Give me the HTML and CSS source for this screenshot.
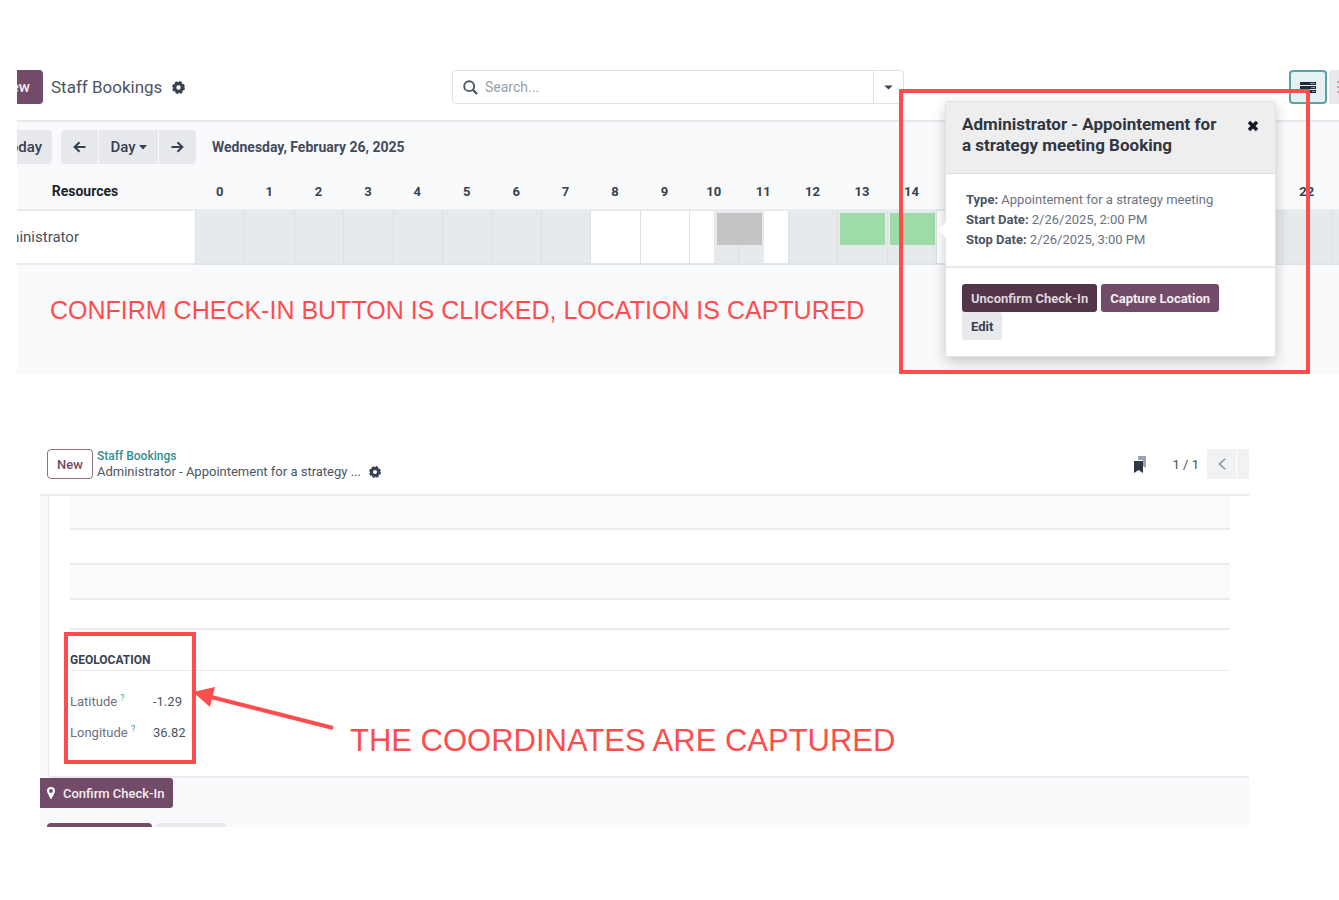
FILE: index.html
```html
<!DOCTYPE html>
<html lang="en">
<head>
<meta charset="utf-8">
<title>Staff Bookings</title>
<link rel="stylesheet" href="styles.css">
</head>
<body>
<main class="page">
  <section class="panel schedule">
    <header class="topbar">
      <button class="btn btn-primary btn-new" type="button">New</button>
      <h1 class="title">Staff Bookings</h1>
      <button class="icon-btn gear" type="button" aria-label="Settings"><svg width="13" height="13" viewBox="0 0 16 16"><g fill="none" stroke="#374151"><circle cx="8" cy="8" r="4.7" stroke-width="4"/><circle cx="8" cy="8" r="6.800" stroke-width="2.200" stroke-dasharray="3.400 1.940"/></g></svg></button>
      <div class="search">
        <svg class="search-icon" width="15" height="15" viewBox="0 0 16 16"><g fill="none" stroke="#4b5563" stroke-width="2"><circle cx="6.6" cy="6.6" r="5.3"/><path d="M10.5 10.5 15 15" stroke-width="2.4"/></g></svg>
        <input class="search-input" type="text" placeholder="Search..." aria-label="Search">
        <button class="search-toggle" type="button" aria-label="Filters"><svg width="9" height="5" viewBox="0 0 10 6"><path d="M0 .5h10L5 5.5z" fill="#374151"/></svg></button>
      </div>
      <div class="views">
        <button class="view view-active" type="button" aria-label="Gantt view"><svg width="16" height="13" viewBox="0 0 16 13"><path fill="#1f2937" d="M0 1h16v3H0zM0 5h16v3H0zM4 9h12v3H4z"/><path stroke="#8a9ba5" stroke-width="1" d="M10 2.500h5M11 6.500h4M12 10.500h3"/></svg></button>
        <button class="view view-list" type="button" aria-label="List view"><svg width="12" height="12" viewBox="0 0 12 12"><path stroke="#d9a0ae" stroke-width="2" d="M0 1h12M0 6h12M0 11h12"/></svg></button>
      </div>
    </header>

    <nav class="toolbar">
      <button class="btn btn-light btn-today" type="button">Today</button>
      <div class="range">
        <button class="btn btn-light step" type="button" aria-label="Previous"><svg width="13" height="12" viewBox="0 0 13 12"><path d="M12.5 6H2M6.5 1.2 1.6 6l4.9 4.8" fill="none" stroke="#374151" stroke-width="2"/></svg></button>
        <button class="btn btn-light scale" type="button">Day<svg width="8" height="5" viewBox="0 0 8 5"><path d="M0 0h8L4 4.5z" fill="#374151"/></svg></button>
        <button class="btn btn-light step" type="button" aria-label="Next"><svg width="13" height="12" viewBox="0 0 13 12"><path d="M.5 6H11M6.5 1.2 11.4 6l-4.9 4.8" fill="none" stroke="#374151" stroke-width="2"/></svg></button>
      </div>
      <strong class="date">Wednesday, February 26, 2025</strong>
    </nav>

    <table class="gantt">
      <thead>
        <tr><th class="resource-head">Resources</th><th>0</th><th>1</th><th>2</th><th>3</th><th>4</th><th>5</th><th>6</th><th>7</th><th>8</th><th>9</th><th>10</th><th>11</th><th>12</th><th>13</th><th>14</th><th></th><th></th><th></th><th></th><th></th><th></th><th></th><th>22</th><th></th></tr>
      </thead>
      <tbody>
        <tr>
          <th class="resource" scope="row"><span class="resource-name">Administrator</span></th>
          <td></td><td></td><td></td><td></td><td></td><td></td><td></td><td></td>
          <td class="open"></td><td class="open"></td>
          <td class="open-first"><span class="pill pill-break"></span></td>
          <td class="open-last"></td><td></td>
          <td><span class="pill pill-booked"></span></td>
          <td><span class="pill pill-booked"></span></td>
          <td class="open"></td><td></td><td></td><td></td><td></td><td></td><td></td><td></td><td></td>
        </tr>
      </tbody>
    </table>

    <p class="note note-location">CONFIRM CHECK-IN BUTTON IS CLICKED, LOCATION IS CAPTURED</p>

    <article class="popover">
      <header class="popover-head">
        <h2 class="popover-title">Administrator - Appointement for a strategy meeting Booking</h2>
        <button class="icon-btn" type="button" aria-label="Close"><svg width="12" height="12" viewBox="0 0 12 12"><path d="M2 2l8 8M10 2l-8 8" stroke="#111827" stroke-width="3.4"/></svg></button>
      </header>
      <div class="popover-body">
        <div><b>Type:</b> Appointement for a strategy meeting</div>
        <div><b>Start Date:</b> 2/26/2025, 2:00 PM</div>
        <div><b>Stop Date:</b> 2/26/2025, 3:00 PM</div>
      </div>
      <footer class="popover-foot">
        <button class="btn-small btn-dark" type="button">Unconfirm Check-In</button>
        <button class="btn-small btn-primary" type="button">Capture Location</button>
        <button class="btn-small btn-light" type="button">Edit</button>
      </footer>
    </article>
    <div class="frame frame-popover"></div>
  </section>

  <section class="panel record">
    <header class="record-head">
      <button class="btn-outline" type="button">New</button>
      <div class="crumbs">
        <a class="crumb-link" href="#">Staff Bookings</a>
        <span class="crumb-current">Administrator - Appointement for a strategy ...
          <button class="icon-btn" type="button" aria-label="Actions"><svg width="12" height="12" viewBox="0 0 16 16"><g fill="none" stroke="#374151"><circle cx="8" cy="8" r="4.7" stroke-width="4"/><circle cx="8" cy="8" r="6.800" stroke-width="2.200" stroke-dasharray="3.400 1.940"/></g></svg></button>
        </span>
      </div>
      <div class="pager">
        <button class="icon-btn bookmarks" type="button" aria-label="Bookmarks"><svg width="12" height="17" viewBox="0 0 12 17"><path d="M4 0h8v12l-3-2V4H4z" fill="#9ca3af"/><path d="M0 5h9v12l-4.500-3L0 17z" fill="#2f3747"/></svg></button>
        <span class="count">1 / 1</span>
        <button class="page-btn" type="button" aria-label="Previous record"><svg width="8" height="12" viewBox="0 0 8 12"><path d="M7.300.7 1.500 6l5.800 5.300" fill="none" stroke="#8b8f96" stroke-width="1.500"/></svg></button>
        <button class="page-btn page-next" type="button" aria-label="Next record"><svg width="8" height="12" viewBox="0 0 8 12"><path d="M.7.7 6.500 6 .7 11.300" fill="none" stroke="#b8bbc0" stroke-width="1.500"/></svg></button>
      </div>
    </header>

    <div class="sheet">
      <table class="lines">
        <tbody><tr class="first"><td></td></tr><tr><td></td></tr><tr><td></td></tr><tr class="last"><td></td></tr></tbody>
      </table>
      <h2 class="group-title">GEOLOCATION</h2>
      <dl class="fields">
        <dt>Latitude <sup>?</sup></dt><dd>-1.29</dd>
        <dt>Longitude <sup>?</sup></dt><dd>36.82</dd>
      </dl>
    </div>

    <button class="btn-confirm" type="button"><svg width="8" height="12" viewBox="0 0 8 12"><path fill="#fff" fill-rule="evenodd" d="M4 0a4 4 0 0 1 4 4c0 1-.4 1.700-.8 2.500L4.700 11.500Q4 12.500 3.300 11.500L.8 6.500C.4 5.700 0 5 0 4a4 4 0 0 1 4-4zm0 2.100a1.900 1.900 0 1 0 0 3.800 1.900 1.900 0 0 0 0-3.800z"/></svg>Confirm Check-In</button>
    <div class="tabs"><span class="tab tab-primary"></span><span class="tab tab-light"></span></div>

    <div class="frame frame-geo"></div>
    <svg class="arrow" width="144" height="46" viewBox="0 0 144 46"><path d="M18 10 140 41" stroke="#ff4d4d" stroke-width="4"/><path d="M0 5 22 0 17 20z" fill="#ff4d4d"/></svg>
    <p class="note note-coords">THE COORDINATES ARE CAPTURED</p>
  </section>
</main>
</body>
</html>
```
FILE: styles.css
```css
* { box-sizing: border-box; }
body { margin: 0; background: #fff; color: #495057; font-family: Roboto, "Liberation Sans", sans-serif; }
h1, h2, p, dl, dd { margin: 0; }
button, input { font: inherit; color: inherit; margin: 0; border: 0; padding: 0; }
svg { display: block; flex: none; }

.page { display: flex; flex-direction: column; gap: 74px; padding: 70px 0; }
.panel { position: relative; overflow: hidden; background: #f9fafc; }
.schedule { margin-left: 17px; padding-bottom: 49px; }
.record { margin: 0 90px 0 40px; }

.btn { height: 34px; font-size: 15px; font-weight: 500; border-radius: 4px; }
.btn-primary { background: #714b67; color: #f4eef2; }
.btn-dark { background: #523549; color: #ded5db; }
.btn-light { background: #e7e9ed; color: #374151; }
.icon-btn { display: inline-flex; background: none; }

.topbar { display: flex; align-items: flex-start; height: 52px; background: #fff; border-bottom: 2px solid #e7e9ec; }
.btn-new { width: 56px; margin-left: -30px; }
.title { margin-left: 8px; font-size: 17px; line-height: 34px; font-weight: 400; color: #4b5563; }
.gear { margin: 11px 0 0 10px; }
.search { position: absolute; left: 435px; display: flex; align-items: center; width: 452px; height: 34px; border: 1px solid #dee2e6; border-radius: 4px; background: #fff; }
.search-icon { margin: 0 7px 0 10px; }
.search-input { flex: 1; min-width: 0; height: 32px; font-size: 14px; background: none; outline: 0; }
.search-input::placeholder { color: #9a9fa6; opacity: 1; }
.search-toggle { display: flex; align-items: center; justify-content: center; width: 30px; height: 32px; border-left: 1px solid #dee2e6; background: none; }
.views { display: flex; gap: 2px; margin-left: auto; margin-right: -26px; }
.view { display: flex; align-items: center; justify-content: center; width: 38px; height: 34px; background: #e7e9ed; }
.view-active { border: 2px solid #5aa3a5; border-radius: 4px; background: #e5f1f2; }
.view-list { width: 36px; justify-content: flex-start; padding-left: 8px; }

.toolbar { display: flex; align-items: center; padding-top: 8px; }
.btn-today { width: 64px; margin-left: -29px; text-align: right; padding-right: 10px; }
.range { display: flex; gap: 1px; margin-left: 9px; }
.range .btn { display: flex; align-items: center; justify-content: center; border-radius: 0; }
.range .step { width: 37px; }
.range .step:first-child { border-radius: 4px 0 0 4px; }
.range .step:last-child { border-radius: 0 4px 4px 0; }
.range .scale { width: 59px; gap: 3px; }
.date { margin-left: 16px; font-size: 14px; font-weight: 700; color: #434c5a; }

.gantt { width: calc(100% + 42px); table-layout: fixed; border-collapse: separate; border-spacing: 0; }
.gantt thead th { height: 47px; padding: 9px 0 0; font-size: 13px; font-weight: 700; color: #374151; border-bottom: 2px solid #e9ebee; }
.gantt .resource-head { width: 178px; padding-right: 42px; font-size: 14px; color: #212529; }
.gantt td { position: relative; height: 54px; padding: 0; background: #e7eaed; border-left: 1px solid #dcdfe3; border-bottom: 2px solid #e2e5e8; }
.gantt .resource { padding: 0; background: #fff; border-bottom: 2px solid #e9ebee; font-size: 15px; font-weight: 400; text-align: left; }
.resource-name { margin-left: -29px; }
.gantt .open { background: #fff; }
.gantt .open-first { background: linear-gradient(90deg, #fff 50%, #e7eaed 50%); }
.gantt .open-last { background: linear-gradient(90deg, #e7eaed 50%, #fff 50%); }
.pill { position: absolute; z-index: 1; top: 2px; left: 2px; width: 45px; height: 32px; }
.pill-booked { background: #9fdba7; }
.pill-break { left: 27px; background: #c4c4c4; }

.note { font-family: "Liberation Sans", Arial, sans-serif; color: #ff4d4d; white-space: nowrap; }
.note-location { margin: 30px 0 0 33px; font-size: 25px; line-height: 30px; }
.note-coords { position: absolute; left: 310px; top: 276px; font-size: 31px; line-height: 34px; }
.frame { position: absolute; border: 4px solid #ff4d4d; }
.frame-popover { z-index: 2; left: 882px; top: 19px; width: 411px; height: 285px; }
.frame-geo { left: 24px; top: 184px; width: 132px; height: 132px; }
.arrow { position: absolute; left: 153px; top: 239px; }

.popover { position: absolute; z-index: 1; left: 928px; top: 31px; width: 331px; border: 1px solid #e1e3e6; border-radius: 3px; background: #fff; box-shadow: 0 5px 14px rgba(0, 0, 0, .2); }
.popover::before { content: ""; position: absolute; left: -7px; top: 120px; border: 8px solid transparent; border-left: 0; border-right: 7px solid #fff; }
.popover-head { display: flex; align-items: flex-start; justify-content: space-between; padding: 12px 16px 17px; background: #eee; border-bottom: 1px solid #dfe1e4; }
.popover-head .icon-btn { margin-top: 6px; }
.popover-title { width: 260px; font-size: 17px; line-height: 21px; font-weight: 700; color: #303642; }
.popover-body { padding: 16px 20px; font-size: 13px; line-height: 20px; color: #6b7280; border-bottom: 2px solid #e7e9ec; }
.popover-body b { font-weight: 700; color: #4b5563; }
.popover-foot { display: flex; flex-wrap: wrap; column-gap: 4px; padding: 16px; }
.btn-small { height: 28px; padding: 0 9px; font-size: 13px; font-weight: 700; border-radius: 3px; }

.record-head { display: flex; align-items: flex-start; height: 48px; padding: 1px 0 0 7px; background: #fff; border-bottom: 2px solid #e9ebee; }
.btn-outline { width: 46px; height: 30px; border: 1px solid #8d6e85; border-radius: 4px; background: #fff; color: #714b67; font-size: 13px; font-weight: 500; }
.crumbs { display: flex; flex-direction: column; margin-left: 4px; line-height: 15px; white-space: nowrap; }
.crumb-link { color: #2f8f8f; font-size: 12px; font-weight: 500; text-decoration: none; }
.crumb-current { display: flex; align-items: center; gap: 8px; font-size: 13px; color: #4b5563; }
.pager { display: flex; align-items: center; margin-left: auto; margin-right: -20px; }
.count { margin: 0 8px 0 27px; font-size: 13px; }
.page-btn { display: flex; align-items: center; justify-content: center; width: 29px; height: 30px; background: #f1f2f4; }
.page-next { width: 32px; margin-left: 1px; }

.sheet { margin-left: 8px; padding: 0 19px 0 21px; background: #fff; border: solid #e9ebee; border-width: 0 0 2px 1px; border-bottom-left-radius: 4px; }
.lines { width: 100%; border-collapse: separate; border-spacing: 0; }
.lines td { height: 35px; padding: 0; border-bottom: 2px solid #e9ebec; }
.lines tr:nth-child(odd) td { background: #fbfbfb; }
.lines .first td { height: 34px; }
.lines .last td { height: 30px; }
.group-title { padding: 21px 0 0; font-size: 12px; line-height: 19px; font-weight: 700; color: #374151; border-bottom: 1px solid #e9ebee; }
.fields { display: grid; grid-template-columns: 83px auto; padding: 15px 0 28px; font-size: 13px; line-height: 31px; color: #4b5563; }
.fields dt { color: #6b7280; }
.fields sup { font-size: 9px; line-height: 0; vertical-align: 5px; color: #3aa5a8; }

.btn-confirm { display: flex; align-items: center; gap: 8px; height: 30px; padding: 0 9px 0 7px; border-radius: 0 3px 3px 0; background: #714b67; color: #f4eef2; font-size: 13px; font-weight: 500; }
.tabs { display: flex; gap: 4px; margin: 15px 0 0 7px; }
.tab { height: 4px; border-radius: 4px 4px 0 0; }
.tab-primary { width: 105px; background: #714b67; }
.tab-light { width: 70px; background: #e7e9ed; }
```
